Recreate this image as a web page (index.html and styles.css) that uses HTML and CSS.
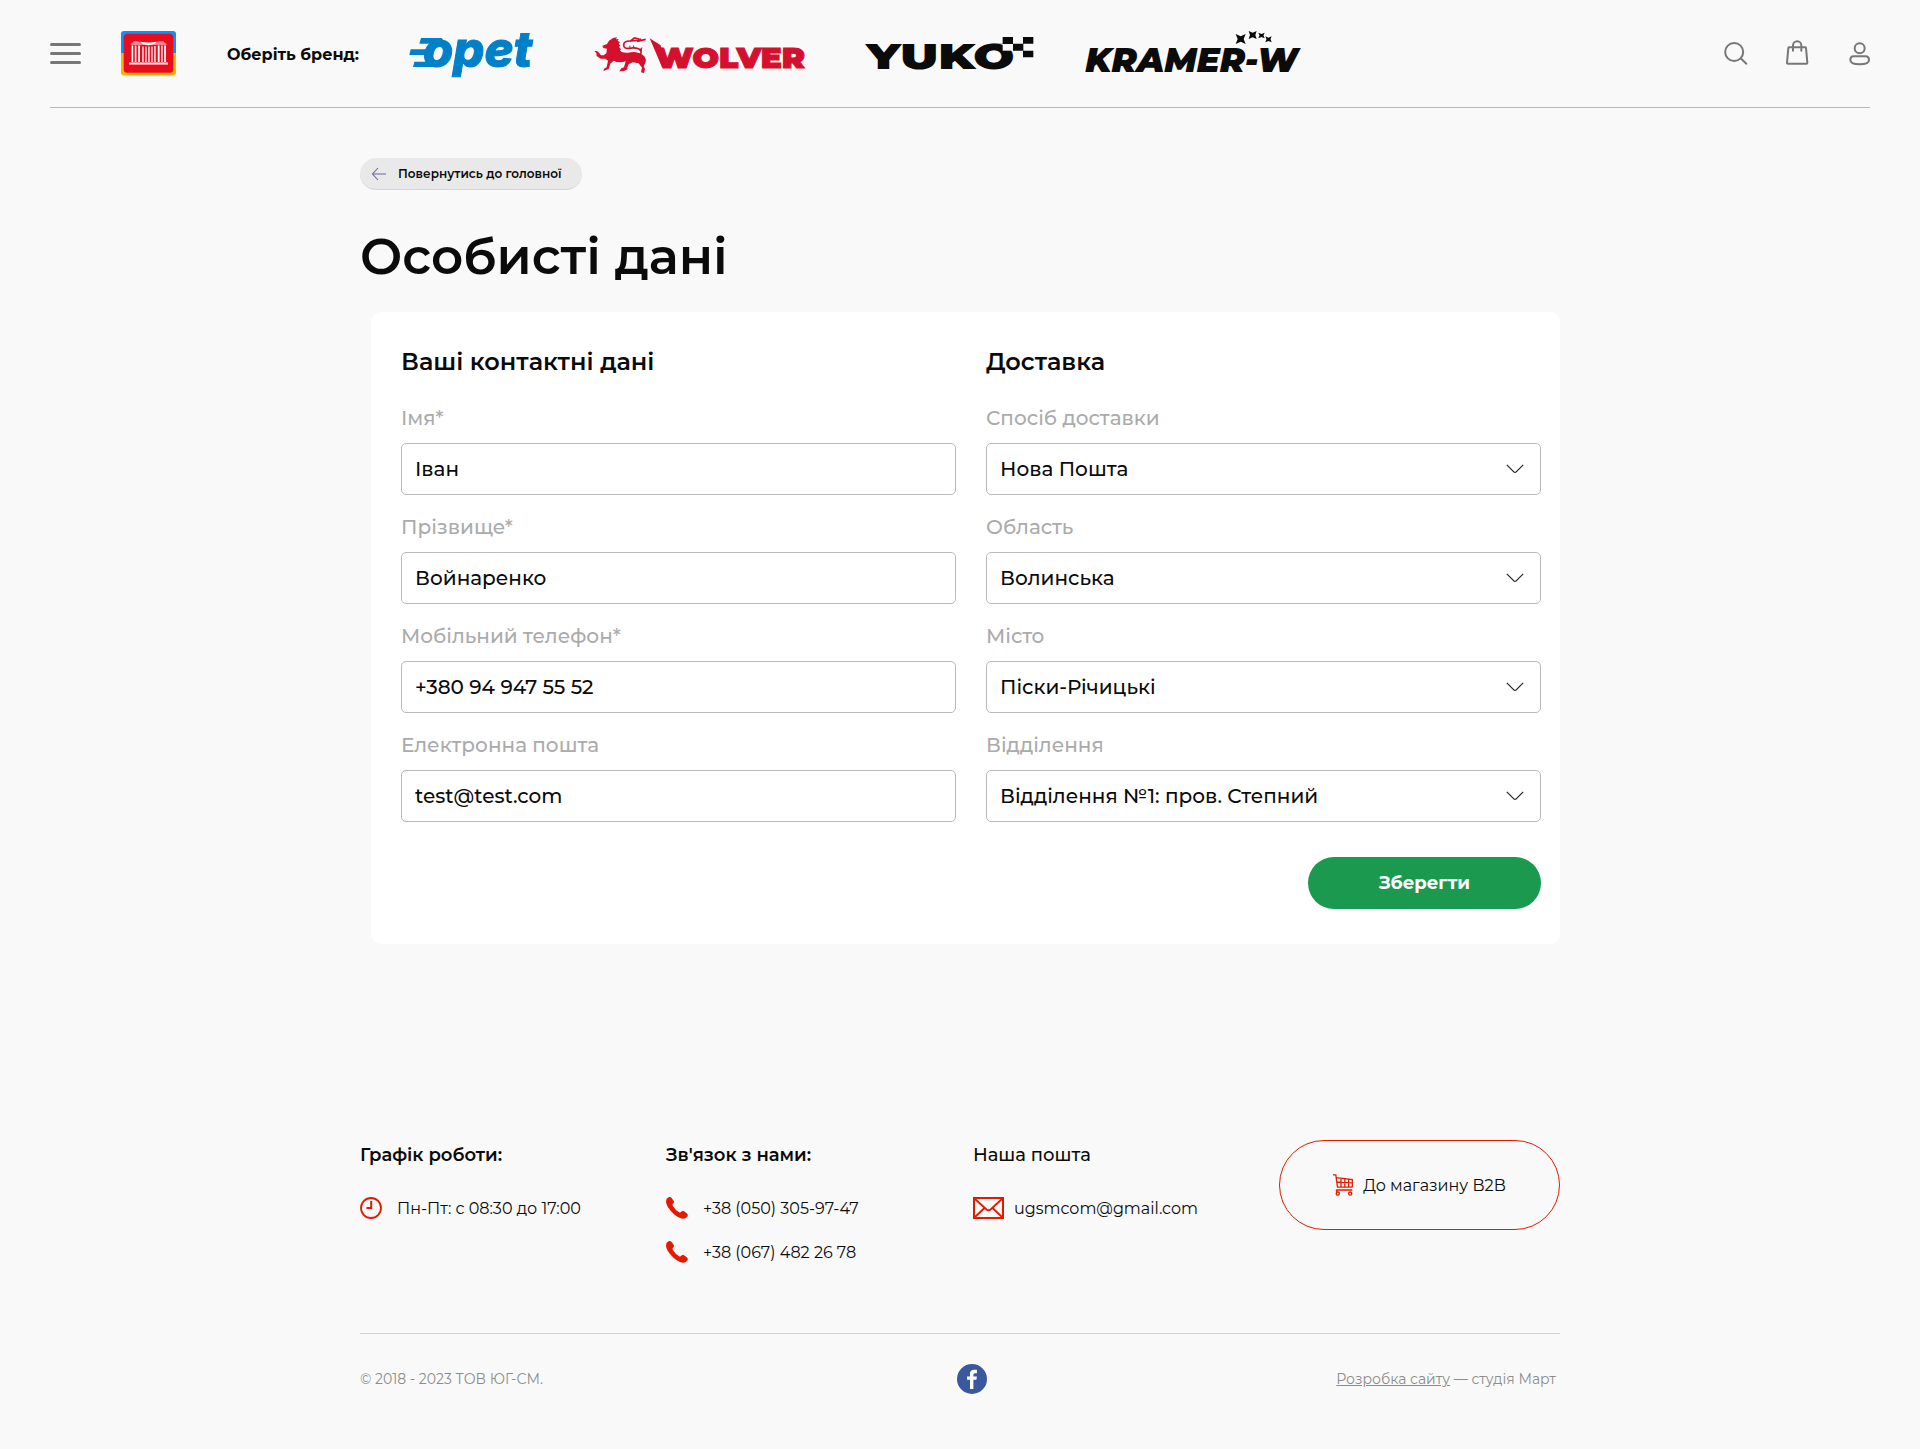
FILE: index.html
```html
<!DOCTYPE html>
<html lang="uk">
<head>
<meta charset="utf-8">
<title>Особисті дані</title>
<link rel="stylesheet" href="styles.css">
</head>
<body>
<header class="header">
  <button class="burger" aria-label="Меню"><span></span><span></span><span></span></button>
  <a class="logo" href="#">
    <svg width="55" height="45" viewBox="0 0 55 45">
      <path d="M0 22V3a3 3 0 0 1 3-3h49a3 3 0 0 1 3 3v19z" fill="#0a90ff"/>
      <path d="M0 22v19.500a3 3 0 0 0 3 3h49a3 3 0 0 0 3-3V22z" fill="#ffb000"/>
      <rect x="2.700" y="2.700" width="49.600" height="39" rx="3.500" fill="#e80c1f"/>
      <g fill="#fff">
        <path d="M8 31.500h39v2H8z"/>
        <path d="M9.500 13.300L13 10.300h4l2 1q8.500 5 17 0l2-1h4l4 3-1.500.7H10.500z" opacity=".5"/>
        <path d="M19 10.800q8.500 1.500 17 0-3 3.400-8.500 3.400T19 10.800z"/>
        <path d="M10.600 14.500h1.600V31h-1.600zM13.800 14.500h1.600V31h-1.600zM17.200 14.500h1.800V31h-1.800zM21.300 15.500h1.300V31h-1.300zM24.300 15.500h1.300V31h-1.300zM27.300 15.500h1.300V31h-1.300zM30.300 15.500h1.300V31h-1.300zM33.300 15h1.300v16h-1.300zM36.800 14.500h1.800V31h-1.800zM40.200 14.500h1.400V31h-1.400zM43.200 14.500h1.800V31h-1.800z"/>
      </g>
    </svg>
  </a>
  <p class="brand-label">Оберіть бренд:</p>
  <nav class="brands">
    <a class="brand brand-opet" href="#">
      <svg width="127" height="46" viewBox="55 48 381 138">
        <g fill="#0080c8">
          <path d="M91 69h62l12 17H86zM60 103h48l-5 17H56zM71 140h72l-10 16H67z"/>
          <text class="wm-opet" x="97" y="155" textLength="328" lengthAdjust="spacingAndGlyphs">opet</text>
        </g>
      </svg>
    </a>
    <a class="brand brand-wolver" href="#">
      <svg width="212" height="40" viewBox="612 57 636 120">
        <g fill="#d5102e">
          <path d="M638 91l10-4 6-10 12-8 12-2-3 6 8-1-3 6 7 3-4 5 5 6-4 4 6 7-3 4q8 8 24 6 18-4 30 0 12 2 20 12 6 8 2 18l-5 11 4 8-3 12-9-2 3-14-10-13-18-3-12 6-5 11 3 3-12 6-14 1 6-9 8-3 5-18q-22 6-36-2l-10 9-5 16-16 6 2-7 8-4 4-20-8-6-14 0-12-8-1-9-6-6 8 0 6 5 6 8 8 0 8-6 2-14-13-2 3-4-6-1z"/>
          <path d="M742 122q16-10 2-20-14-6-30-2-16 2-16-10t18-12q20 1 34-6M716 80l14-11 14 3M738 79l26-6" fill="none" stroke="#d5102e" stroke-width="5"/>
          <path d="M714 97l3-7 2 8zM725 97l4-8 1 9zM744 104l10-8-2 14zM776 70l32 20 16 40-10 28z"/>
          <text class="wm-wolver" x="794" y="160" textLength="448" lengthAdjust="spacingAndGlyphs">WOLVER</text>
        </g>
      </svg>
    </a>
    <a class="brand brand-yuko" href="#">
      <svg width="170" height="38" viewBox="76 60 510 114">
        <text class="wm-yuko" x="80" y="163" textLength="444" lengthAdjust="spacingAndGlyphs">YUKO</text>
        <path d="M489 86h31v21h-31z" fill="#f9f9f9"/>
        <path d="M455 86h34v-20h31v21h-65zM550 66h31v20h-31zM520 86h31v21h-31zM550 107h31v20h-31z" fill="#0b0b0b"/>
      </svg>
    </a>
    <a class="brand brand-kramer" href="#">
      <svg width="218" height="45" viewBox="732 45 654 135">
        <text class="wm-kramer" x="736" y="171" textLength="638" lengthAdjust="spacingAndGlyphs">KRAMER-W</text>
        <g fill="#0b0b0b">
          <path d="M1187 57l15 7 15-7-6 15 6 15-15-7-15 7 6-15z"/>
          <path d="M1226 48l12 5 12-5-4 12 4 12-12-5-12 5 4-12z"/>
          <path d="M1255 53l9.500 4 9.500-4-3.500 8.500 3.500 8.500-9.500-4-9.500 4 3.500-8.500z"/>
          <path d="M1276 64l9.500 4 9.500-4-3.500 9 3.500 9-9.500-4-9.500 4 3.500-9z"/>
        </g>
      </svg>
    </a>
  </nav>
  <div class="tools">
    <svg width="24" height="26" viewBox="72 60 72 78"><g class="tool-stroke"><circle cx="102.500" cy="96" r="27"/><path d="M122 115l17 16"/></g></svg>
    <svg width="24" height="26" viewBox="258 60 72 78"><g class="tool-stroke"><path d="M267 82h49q2 0 2 2l4 44q0 3-3 3h-55q-3 0-3-3l4-44q0-2 2-2zM279 92V76a12.500 12.500 0 0 1 25 0v16"/></g></svg>
    <svg width="24" height="26" viewBox="445 60 72 78"><g class="tool-stroke"><circle cx="480" cy="84.500" r="15"/><path d="M462 109h36q10 0 10 12 0 12-28 12t-28-12q0-12 10-12z"/></g></svg>
  </div>
</header>

<main class="container">
  <a class="back" href="#">
    <svg width="16" height="14" viewBox="0 0 16 14"><path d="M7 1L1.500 7 7 13M1.500 7H15" fill="none" stroke="#7065a3" stroke-width="1.100"/></svg>
    <span>Повернутись до головної</span>
  </a>
  <h1 class="title">Особисті дані</h1>

  <form class="card">
    <section class="column">
      <h2 class="card-title">Ваші контактні дані</h2>
      <label class="field"><span>Імя*</span><input class="box" value="Іван"></label>
      <label class="field"><span>Прізвище*</span><input class="box" value="Войнаренко"></label>
      <label class="field"><span>Мобільний телефон*</span><input class="box" value="+380 94 947 55 52"></label>
      <label class="field"><span>Електронна пошта</span><input class="box" value="test@test.com"></label>
    </section>
    <section class="column">
      <h2 class="card-title">Доставка</h2>
      <div class="field"><span>Спосіб доставки</span><div class="box select">Нова Пошта<svg width="18" height="10" viewBox="0 0 18 10"><path d="M.8.800l7 7q1.200 1.200 2.400 0l7-7"/></svg></div></div>
      <div class="field"><span>Область</span><div class="box select">Волинська<svg width="18" height="10" viewBox="0 0 18 10"><path d="M.8.800l7 7q1.200 1.200 2.400 0l7-7"/></svg></div></div>
      <div class="field"><span>Місто</span><div class="box select">Піски-Річицькі<svg width="18" height="10" viewBox="0 0 18 10"><path d="M.8.800l7 7q1.200 1.200 2.400 0l7-7"/></svg></div></div>
      <div class="field"><span>Відділення</span><div class="box select">Відділення №1: пров. Степний<svg width="18" height="10" viewBox="0 0 18 10"><path d="M.8.800l7 7q1.200 1.200 2.400 0l7-7"/></svg></div></div>
      <button class="save" type="button">Зберегти</button>
    </section>
  </form>
</main>

<footer class="container footer">
  <div class="footer-top">
    <section class="info">
      <h3>Графік роботи:</h3>
      <p class="line"><svg width="22" height="22" viewBox="0 0 22 22"><g fill="none" stroke="#e11b00"><circle cx="11" cy="11" r="10" stroke-width="1.800"/><path d="M11.200 4v7H6.500" stroke-width="2"/></g></svg><span>Пн-Пт: с 08:30 до 17:00</span></p>
    </section>
    <section class="info">
      <h3>Зв'язок з нами:</h3>
      <p class="line"><svg width="22" height="22" viewBox="0 0 22 22"><path class="phone" d="M2.500.3Q4.400-.5 5.400.8L7.800 4q.8 1.400-.6 2.500-1.300 1-.3 2.600 2.400 4 6.200 6.200 1.400.7 2.200-.5 1.300-1.500 2.700-.6l3 2.200q1.500 1.200.5 2.800Q19.700 22 16.600 21.800 11.500 21 6.500 15.800 0 9 0 4.500 0 1.300 2.500.3z"/></svg><span>+38 (050) 305-97-47</span></p>
      <p class="line"><svg width="22" height="22" viewBox="0 0 22 22"><path class="phone" d="M2.500.3Q4.400-.5 5.400.8L7.800 4q.8 1.400-.6 2.500-1.300 1-.3 2.600 2.400 4 6.200 6.200 1.400.7 2.200-.5 1.300-1.500 2.700-.6l3 2.200q1.500 1.200.5 2.800Q19.700 22 16.600 21.800 11.500 21 6.500 15.800 0 9 0 4.500 0 1.300 2.500.3z"/></svg><span>+38 (067) 482 26 78</span></p>
    </section>
    <section class="info mail">
      <h3 class="medium">Наша пошта</h3>
      <p class="line"><svg width="31" height="22" viewBox="0 0 31 22"><g fill="none" stroke="#e11b00" stroke-width="2"><path d="M1 1h29v20H1z"/><path d="M2 2l11.500 10.500q2 1.600 4 0L29 2M2 20l9.500-9M29 20l-9.500-9" stroke-width="1.800"/></g></svg><span>ugsmcom@gmail.com</span></p>
    </section>
    <a class="shop" href="#">
      <svg width="20" height="22" viewBox="0 0 20 22"><g fill="none" stroke="#e11b00" stroke-width="1.300"><path d="M0 .8h2.800L4.500 13.200h14.800M3.300 3.600l16 2v7.600M3.800 8l15.500.8M8 4.500v8.700M11.800 5v8.200M15.600 5.500v7.700M4.500 15.500q-2.500 1.200 0 2.200M3.500 16h15.800"/><circle cx="4.800" cy="19.600" r="1.600"/><circle cx="17.200" cy="19.600" r="1.600"/></g></svg>
      <span>До магазину B2B</span>
    </a>
  </div>
  <div class="footer-bottom">
    <p>© 2018 - 2023 ТОВ ЮГ-СМ.</p>
    <a class="fb" href="#" aria-label="Facebook"><svg width="30" height="30" viewBox="0 0 30 30"><circle cx="15" cy="15" r="15" fill="#3a589b"/><path d="M13 25v-9.200h-3v-3.400h3V10q0-4.200 4.200-4.200h2.700v3.400h-2q-1.500 0-1.500 1.500v1.700h3.500l-.5 3.400h-3V25z" fill="#fff"/></svg></a>
    <p class="studio"><a href="#">Розробка сайту</a> — студія Март</p>
  </div>
</footer>
</body>
</html>
```
FILE: styles.css
```css
* { box-sizing: border-box; }
body {
  margin: 0;
  background: #f9f9f9;
  color: #0b0b0b;
  font-family: Montserrat, Inter, "Open Sans", sans-serif;
}
h1, h2, h3, p { margin: 0; }
a { color: inherit; text-decoration: none; }
svg { display: block; flex: none; overflow: visible; }
button { border: 0; font-family: inherit; cursor: pointer; }

/* Header */
.header {
  display: flex;
  align-items: center;
  height: 108px;
  margin: 0 50px;
  border-bottom: 1px solid #b9b9b9;
}
.burger {
  display: flex;
  flex-direction: column;
  gap: 6px;
  width: 31px;
  padding: 0;
  background: none;
}
.burger span { height: 3px; border-radius: 2px; background: #777; }
.logo { margin-left: 40px; }
.brand-label {
  width: 133px;
  margin-left: 51px;
  padding-top: 1px;
  font-size: 16px;
  font-weight: 700;
  white-space: nowrap;
}
.brands { display: flex; align-items: center; }
.brand-opet { margin-left: 49px; }
.brand-wolver { margin-left: 59px; }
.brand-yuko { margin-left: 58px; }
.brand-kramer { margin-left: 49px; padding-bottom: 2px; }
.wm-opet { font: italic 800 150px Inter, sans-serif; stroke: #0080c8; stroke-width: 3; }
.wm-wolver { font: 900 86px Montserrat, Inter, sans-serif; stroke: #d5102e; stroke-width: 3; }
.wm-yuko { font: 900 108px Montserrat, Inter, sans-serif; fill: #0b0b0b; }
.wm-kramer { font: italic 900 101px Montserrat, Inter, sans-serif; fill: #0b0b0b; }
.tools { display: flex; gap: 38px; margin: 0 -2px 2px auto; }
.tool-stroke {
  fill: none;
  stroke: #777;
  stroke-width: 6;
  stroke-linecap: round;
  stroke-linejoin: round;
}

/* Content */
.container { width: 1200px; margin: 0 auto; }
main.container { padding-top: 50px; }
.back {
  display: flex;
  align-items: center;
  gap: 11px;
  width: 222px;
  height: 32px;
  padding-left: 11px;
  border-radius: 16px;
  border-bottom: 1px solid #d6d6d6;
  background: #e9e9e9;
  font-size: 12px;
  font-weight: 600;
}
.title {
  margin: 37px 0 25px;
  font-size: 50px;
  font-weight: 600;
  line-height: 60px;
}
.card {
  display: grid;
  grid-template-columns: 555px 555px;
  gap: 30px;
  margin-left: 11px;
  padding: 34px 19px 35px 30px;
  border-radius: 10px;
  background: #fff;
}
.column { display: flex; flex-direction: column; gap: 18px; }
.card-title {
  margin-bottom: 9px;
  font-size: 24px;
  font-weight: 600;
  line-height: 32px;
}
.field {
  display: flex;
  flex-direction: column;
  gap: 12px;
  font-size: 20px;
  font-weight: 500;
  line-height: 26px;
  color: #ababab;
  padding-bottom: 1px;
}
.box {
  width: 100%;
  height: 52px;
  padding: 0 13px;
  border: 1px solid #bababa;
  border-radius: 5px;
  background: #fff;
  color: #0b0b0b;
  font-family: inherit;
  font-size: 20px;
  font-weight: 500;
}
.select {
  display: flex;
  align-items: center;
  justify-content: space-between;
  padding-right: 16px;
}
.select svg { fill: none; stroke: #222; stroke-width: 1.2; }
.save {
  align-self: flex-end;
  width: 233px;
  height: 52px;
  margin-top: 16px;
  border-radius: 26px;
  background: #1b994f;
  color: #fff;
  font-size: 18px;
  font-weight: 700;
}

/* Footer */
.footer { padding-top: 196px; }
.footer-top {
  display: grid;
  grid-template-columns: 306px 307px 306px 281px;
  height: 193px;
  border-bottom: 1px solid #d2d2d2;
  box-sizing: content-box;
}
.info { padding-top: 3px; }
.info h3 { margin-bottom: 30px; font-size: 18px; font-weight: 600; line-height: 24px; }
.info .medium { font-weight: 500; }
.line {
  display: flex;
  align-items: center;
  gap: 15px;
  height: 22px;
  margin-bottom: 22px;
  font-size: 16px;
}
.mail .line { gap: 10px; }
.phone { fill: #e11b00; }
.shop {
  display: flex;
  align-items: center;
  justify-content: center;
  gap: 10px;
  height: 90px;
  border: 1px solid #e11b00;
  border-radius: 45px;
  font-size: 16px;
}
.footer-bottom {
  display: grid;
  grid-template-columns: 597px 30px 1fr;
  align-items: center;
  padding: 30px 0 55px;
  font-size: 14px;
  color: #8c8c8c;
}
.studio { justify-self: end; padding-right: 4px; }
.studio a { text-decoration: underline; }
```
